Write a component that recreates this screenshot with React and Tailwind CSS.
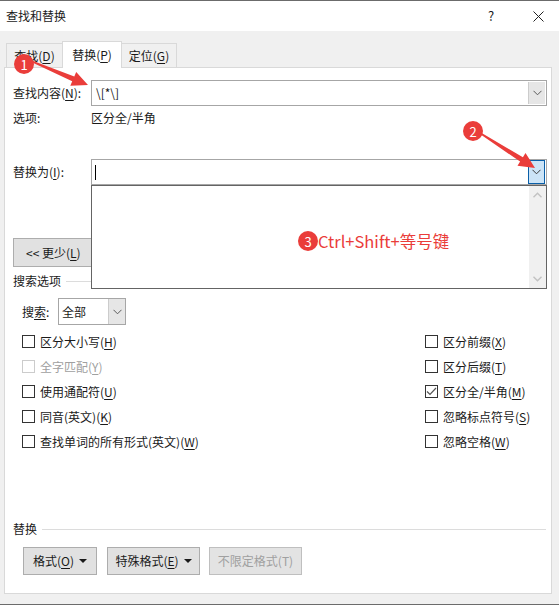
import React from "react";

const RED = "#ea3d3a";

const Chevron = ({color = "#5a5a5a"}) => (
    <svg width="9" height="6" viewBox="0 0 9 6">
        <polyline points="0.5,0.8 4.5,4.8 8.5,0.8" fill="none" stroke={color} strokeWidth="1"/>
    </svg>
);

const ScrollArrow = ({up}) => (
    <svg width="9" height="6" viewBox="0 0 9 6">
        <polyline
            points={up ? "0.5,5.2 4.5,1.2 8.5,5.2" : "0.5,0.8 4.5,4.8 8.5,0.8"}
            fill="none"
            stroke="#c2c2c2"
            strokeWidth="1.4"
        />
    </svg>
);

const Key = ({children}) => <span className="underline underline-offset-2">{children}</span>;

const CheckItem = ({pre, k, checked, disabled}) => (
    <div className="flex h-[25px] items-center">
        <div
            className={`flex h-[13px] w-[13px] items-center justify-center border bg-white ${
                disabled ? "border-[#cccccc]" : "border-[#333333]"
            }`}
        >
            {checked && (
                <svg width="11" height="9" viewBox="0 0 11 9">
                    <polyline points="1,4.5 4,7.5 10,1" fill="none" stroke="#555" strokeWidth="1.2"/>
                </svg>
            )}
        </div>
        <span className={`ml-[5px] ${disabled ? "text-[#a0a0a0]" : "text-[#1a1a1a]"}`}>
            {pre}(<Key>{k}</Key>)
        </span>
    </div>
);

const Btn = ({children, className, disabled}) => (
    <div
        className={`flex h-[28px] items-center justify-center border ${className} ${
            disabled ? "border-[#bfbfbf] bg-[#e3e3e3] text-[#a0a0a0]" : "border-[#adadad] bg-[#e1e1e1] text-[#1a1a1a]"
        }`}
    >
        {children}
    </div>
);

const Caret = () => <span className="ml-[5px] inline-block border-x-[4px] border-t-[4px] border-x-transparent border-t-[#1a1a1a]"/>;

// tapered arrow, computed from its two ends
const arrowPoints = (x1, y1, x2, y2) => {
    const dx = x2 - x1, dy = y2 - y1, L = Math.hypot(dx, dy);
    const ux = dx / L, uy = dy / L, nx = -uy, ny = ux;
    const headL = 16, headW = 7.5, shaftW = 2.6, tailW = 0.8;
    const bx = x2 - ux * headL, by = y2 - uy * headL;
    const p = [
        [x1 + nx * tailW, y1 + ny * tailW],
        [bx + nx * shaftW, by + ny * shaftW],
        [bx + nx * headW, by + ny * headW],
        [x2, y2],
        [bx - nx * headW, by - ny * headW],
        [bx - nx * shaftW, by - ny * shaftW],
        [x1 - nx * tailW, y1 - ny * tailW],
    ];
    return p.map(([a, b]) => `${a.toFixed(1)},${b.toFixed(1)}`).join(" ");
};

const Badge = ({n, className}) => (
    <div
        className={`absolute flex h-[20px] w-[20px] items-center justify-center rounded-full text-[13px] leading-none text-white ${className}`}
        style={{background: RED}}
    >
        {n}
    </div>
);

const App = () => {
    return (
        <div className="relative h-[605px] w-[559px] overflow-hidden border-y border-[#6b6b6b] bg-[#f0f0f0] font-['Noto_Sans_CJK_SC',sans-serif] text-[12px] leading-[16px] text-[#1a1a1a]">
            {/* Title bar */}
            <div className="flex h-[30px] items-center bg-white pl-[6px]">
                <span className="flex-1">查找和替换</span>
                <span className="w-[12px] text-[13px]">?</span>
                <div className="ml-[32px] mr-[15px] flex h-[12px] w-[12px] items-center justify-center">
                    <svg width="11" height="11" viewBox="0 0 11 11">
                        <path d="M0.5 0.5 L10.5 10.5 M10.5 0.5 L0.5 10.5" stroke="#222" strokeWidth="1"/>
                    </svg>
                </div>
            </div>

            {/* Tabs */}
            <div className="mt-[10px] flex h-[26px] items-end pl-[6px]">
                <div className="flex h-[24px] w-[56px] items-center justify-center border-l border-t border-[#d9d9d9]">
                    查找(<Key>D</Key>)
                </div>
                <div className="relative z-10 -mb-px flex h-[27px] w-[60px] items-center justify-center border-x border-t border-[#d9d9d9] bg-white">
                    替换(<Key>P</Key>)
                </div>
                <div className="flex h-[24px] w-[55px] items-center justify-center border-r border-t border-[#d9d9d9]">
                    定位(<Key>G</Key>)
                </div>
            </div>

            {/* Panel */}
            <div className="ml-[4px] flex h-[527px] w-[548px] flex-col border border-[#d9d9d9] bg-white pl-[8px] pr-[4px]">
                <div className="mt-[12px] flex items-center">
                    <span className="w-[78px]">查找内容(<Key>N</Key>):</span>
                    <div className="flex h-[26px] flex-1 items-center border border-[#a6a6a6] bg-white">
                        <span className="flex-1 pl-[4px]">\[*\]</span>
                        <div className="mr-px flex h-[22px] w-[17px] items-center justify-center border-l border-[#cccccc] bg-[#e6e6e6]">
                            <Chevron/>
                        </div>
                    </div>
                </div>

                <div className="mt-[4px] flex">
                    <span className="w-[78px]">选项:</span>
                    <span>区分全/半角</span>
                </div>

                <div className="mt-[33px] flex items-center">
                    <span className="w-[78px]">替换为(<Key>I</Key>):</span>
                    <div className="relative z-20 flex h-[26px] flex-1 items-center border border-[#a6a6a6] bg-white">
                        <div className="ml-[3px] h-[15px] w-px bg-black"/>
                        <div className="flex-1"/>
                        <div className="mr-px flex h-[24px] w-[17px] items-center justify-center border border-[#0a5fa8] bg-[#cce4f7]">
                            <Chevron color="#3a3a3a"/>
                        </div>
                        {/* open list */}
                        <div className="absolute left-[-1px] right-[-1px] top-[25px] flex h-[104px] border border-[#646464] bg-white">
                            <div className="flex-1"/>
                            <div className="flex w-[17px] flex-col items-center justify-between bg-[#f0f0f0] py-[6px]">
                                <ScrollArrow up/>
                                <ScrollArrow/>
                            </div>
                        </div>
                    </div>
                </div>

                <div className="mt-[53px] flex h-[29px] w-[79px] items-center border border-[#adadad] bg-[#e1e1e1] pl-[12px]">
                    &lt;&lt; 更少(<Key>L</Key>)
                </div>

                <div className="mt-[6px] flex items-center">
                    <span>搜索选项</span>
                    <div className="ml-[5px] h-px flex-1 bg-[#dcdcdc]"/>
                </div>

                <div className="ml-[9px] mt-[9px] flex items-center">
                    <span className="w-[36px]">搜<Key>索</Key>:</span>
                    <div className="flex h-[27px] w-[68px] items-center border border-[#a6a6a6] bg-white">
                        <span className="flex-1 pl-[3px]">全部</span>
                        <div className="flex h-[25px] w-[17px] items-center justify-center border-l border-[#cccccc] bg-[#e6e6e6]">
                            <Chevron/>
                        </div>
                    </div>
                </div>

                <div className="mt-[4px] flex pl-[9px]">
                    <div className="flex flex-1 flex-col">
                        <CheckItem pre="区分大小写" k="H"/>
                        <CheckItem pre="全字匹配" k="Y" disabled/>
                        <CheckItem pre="使用通配符" k="U"/>
                        <CheckItem pre="同音(英文)" k="K"/>
                        <CheckItem pre="查找单词的所有形式(英文)" k="W"/>
                    </div>
                    <div className="flex w-[122px] flex-col">
                        <CheckItem pre="区分前缀" k="X"/>
                        <CheckItem pre="区分后缀" k="T"/>
                        <CheckItem pre="区分全/半角" k="M" checked/>
                        <CheckItem pre="忽略标点符号" k="S"/>
                        <CheckItem pre="忽略空格" k="W"/>
                    </div>
                </div>

                <div className="mt-[67px] flex items-center pr-[1px]">
                    <span>替换</span>
                    <div className="ml-[5px] h-px flex-1 bg-[#dcdcdc]"/>
                </div>

                <div className="ml-[10px] mt-[10px] flex">
                    <Btn className="w-[74px]">格式(<Key>O</Key>)<Caret/></Btn>
                    <Btn className="ml-[10px] w-[93px]">特殊格式(<Key>E</Key>)<Caret/></Btn>
                    <Btn className="ml-[9px] w-[93px]" disabled>不限定格式(T)</Btn>
                </div>
            </div>

            {/* Annotations */}
            <svg className="pointer-events-none absolute left-0 top-0 z-30" width="559" height="605">
                <polygon points={arrowPoints(31, 60, 88, 84)} fill={RED}/>
                <polygon points={arrowPoints(480, 132, 535, 167)} fill={RED}/>
            </svg>
            <Badge n="1" className="left-[14px] top-[53px] z-40"/>
            <Badge n="2" className="left-[463px] top-[120px] z-40"/>
            <div className="absolute left-[298px] top-[229px] z-40 flex items-center">
                <div
                    className="flex h-[20px] w-[20px] items-center justify-center rounded-full text-[13px] leading-none text-white"
                    style={{background: RED}}
                >
                    3
                </div>
                <span className="text-[16.5px] leading-[22px]" style={{color: RED}}>Ctrl+Shift+等号键</span>
            </div>
        </div>
    );
};

export default App;
